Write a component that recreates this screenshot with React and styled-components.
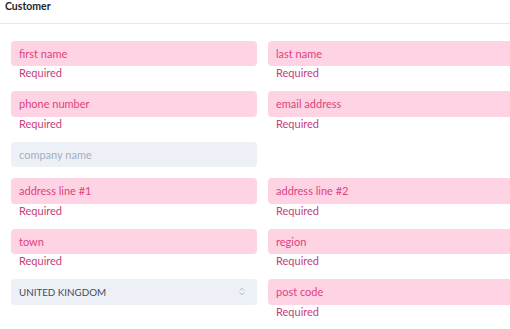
import React from "react";
import styled, { createGlobalStyle } from "styled-components";

const Global = createGlobalStyle`
  html, body { margin: 0; padding: 0; overflow: hidden; background: #fff; }
  body { font-family: "Lato", "Noto Sans", sans-serif; }
`;

const Header = styled.div`
  height: 24px;
  box-sizing: border-box;
  padding: 0 5px;
  border-bottom: 1px solid #e6e8ec;
  font-size: 10.5px;
  font-weight: 700;
  line-height: 12px;
  color: #1f2430;
`;

const Form = styled.div`
  display: grid;
  grid-template-columns: 246px 246px;
  column-gap: 11px;
  row-gap: 11px;
  align-items: start;
  padding: 16.5px 0 0 11px;
  width: 600px;
`;

const Field = styled.div`
  display: flex;
  flex-direction: column;
`;

const Box = styled.div`
  height: 25.5px;
  box-sizing: border-box;
  border-radius: 4px;
  padding: 0 ${(p) => (p.$select ? "12px" : "8px")} 0 8px;
  display: flex;
  align-items: center;
  justify-content: space-between;
  font-size: ${(p) => (p.$select ? "9.8px" : "11px")};
  background: ${(p) => (p.$invalid ? "#fed3e3" : "#edf1f7")};
  color: ${(p) => (p.$invalid ? "#e23f7f" : p.$select ? "#454c5a" : "#a4aebd")};
`;

const Hint = styled.div`
  height: 14px;
  line-height: 14px;
  padding-left: 8px;
  font-size: 11px;
  color: #c4407c;
`;

const Chevrons = () => (
  <svg width="6" height="9" viewBox="0 0 6 9" fill="none" stroke="#a6adb9" strokeWidth="0.9" strokeLinecap="round" strokeLinejoin="round">
    <path d="M1 3.2 L3 1.2 L5 3.2" />
    <path d="M1 5.8 L3 7.8 L5 5.8" />
  </svg>
);

const Input = ({ label, invalid }) => (
  <Field>
    <Box $invalid={invalid}>{label}</Box>
    {invalid && <Hint>Required</Hint>}
  </Field>
);

export default function App() {
  return (
    <>
      <Global />
      <Header>Customer</Header>
      <Form>
        <Input label="first name" invalid />
        <Input label="last name" invalid />
        <Input label="phone number" invalid />
        <Input label="email address" invalid />
        <Input label="company name" />
        <div />
        <Input label="address line #1" invalid />
        <Input label="address line #2" invalid />
        <Input label="town" invalid />
        <Input label="region" invalid />
        <Field>
          <Box $select>
            UNITED KINGDOM
            <Chevrons />
          </Box>
        </Field>
        <Input label="post code" invalid />
      </Form>
    </>
  );
}
